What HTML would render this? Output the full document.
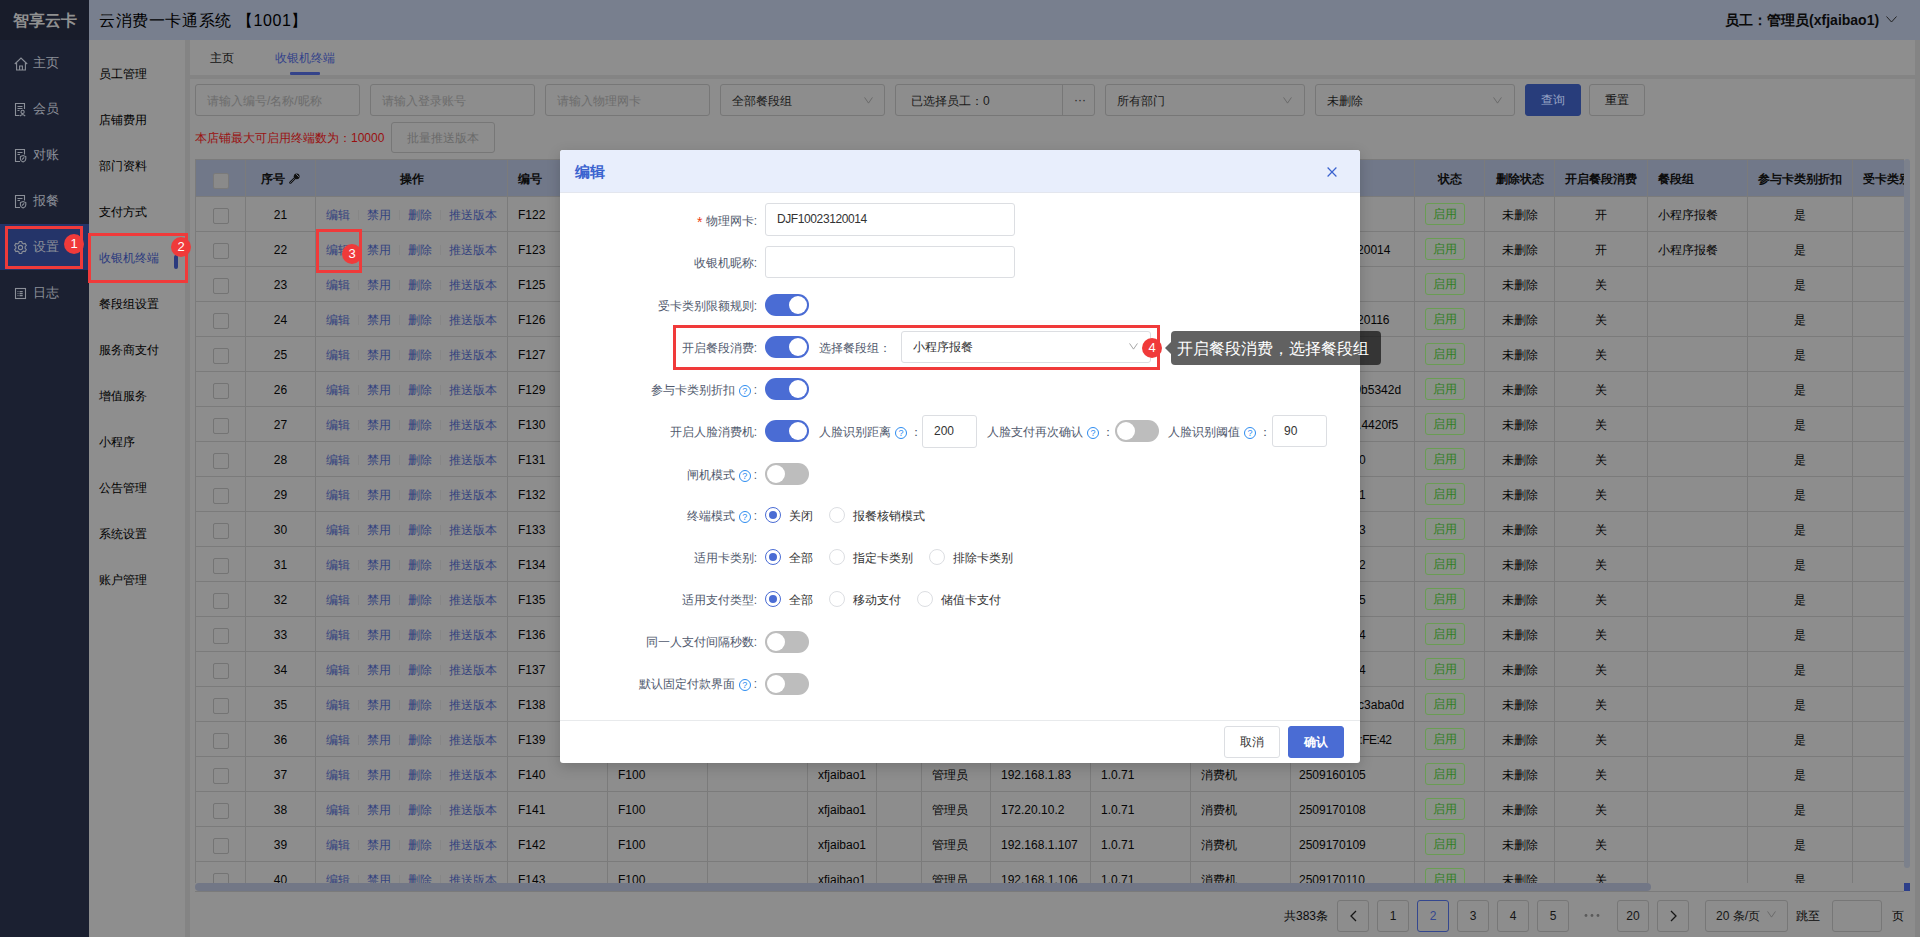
<!DOCTYPE html><html><head><meta charset="utf-8"><style>
*{margin:0;padding:0;box-sizing:border-box}
html,body{width:1920px;height:937px;overflow:hidden}
body{font-family:"Liberation Sans",sans-serif;font-size:12px;color:#0a0a0a;background:#848484;position:relative}
.abs{position:absolute}
#side{position:absolute;left:0;top:0;width:89px;height:937px;background:#1b2031}
#logo{position:absolute;left:0;top:0;width:89px;height:40px;background:#181c2a;color:#909090;font-size:16px;font-weight:bold;line-height:42px;text-align:center;letter-spacing:0}
.sitem{position:absolute;left:0;width:89px;height:46px;line-height:46px;color:#8b8f98;font-size:13px;padding-left:33px}
.sitem svg{position:absolute}
.sitem.act{background:#243469}
#hdr{position:absolute;left:89px;top:0;width:1831px;height:40px;background:#787f8e}
#hdr .t{position:absolute;left:10px;top:1px;line-height:40px;font-size:16px;color:#000;letter-spacing:0.6px}
#hdr .u{position:absolute;right:23px;top:0;line-height:40px;font-size:14px;font-weight:bold;color:#0a0a0a}
#sub{position:absolute;left:89px;top:40px;width:96px;height:897px;background:#8e8e8e}
.mitem{position:absolute;left:10px;font-size:12px;color:#000;line-height:21px}
#tabs{position:absolute;left:190px;top:40px;width:1725px;height:35px;background:#8e8e8e}
.tab{position:absolute;top:1px;line-height:35px;font-size:12px}
#panel{position:absolute;left:190px;top:79px;width:1725px;height:858px;background:#8d8d8d}
.inp{position:absolute;height:32px;border:1px solid #777;border-radius:3px;background:#8d8d8d;line-height:32px;padding-left:11px;color:#1a1a1a;font-size:12px}
.ph{color:#6c6c6c}
.arrow{position:absolute;top:11px;width:11px;height:7px;background:no-repeat}
.btn{position:absolute;height:32px;border:1px solid #777;border-radius:3px;text-align:center;line-height:30px;font-size:12px}
table.g{position:absolute;left:195px;top:159px;border-collapse:collapse;table-layout:fixed}
table.g td,table.g th{border:1px solid #7b7b7b;height:35px;text-align:center;font-size:12px;white-space:nowrap;overflow:hidden;color:#050505;font-weight:normal;padding:2px 0 0 0}
table.g th{background:#717889;height:37px;font-weight:bold;color:#0c0c0c}
table.g td.l,table.g th.l{text-align:left;padding-left:10px}
table.g th{padding-top:3px}
.cb{display:inline-block;width:16px;height:16px;border:1px solid #747474;border-radius:2px;vertical-align:middle;background:#8d8d8d;position:relative;top:1px}
th .cb{background:#8a8a8a;border-color:#7a7a7a}
.lk{color:#33427f}
.sep{display:inline-block;width:1px;height:10px;background:#868686;vertical-align:middle;margin:0 8px}
.tag{display:inline-block;width:40px;height:22px;line-height:21px;border:1px solid #6a9d54;background:#8b9289;color:#2f7f1e;border-radius:3px;font-size:12px;text-align:center;position:relative;top:-1px}
.pg{position:absolute;top:900px;width:32px;height:32px;border:1px solid #777;border-radius:3px;text-align:center;line-height:30px;font-size:12px;color:#161616}
.mask{position:absolute;left:0;top:0;width:1920px;height:937px;background:rgba(0,0,0,0)}
#modal{position:absolute;left:560px;top:150px;width:800px;height:613px;background:#fff;border-radius:3px;overflow:hidden;box-shadow:0 4px 14px rgba(0,0,0,.18)}
#mh{position:absolute;left:0;top:0;width:800px;height:43px;background:#e8eefc;border-bottom:1px solid #e3e6ee}
#mh .tt{position:absolute;left:15px;top:0;line-height:43px;font-size:15px;font-weight:bold;color:#3b63cf}
#mh .x{position:absolute;left:767px;top:17px}
.lab{position:absolute;right:603px;font-size:12px;color:#515a6e;line-height:18px;white-space:nowrap;text-align:right}
.minp{position:absolute;height:33px;border:1px solid #dcdee2;border-radius:3px;background:#fff;line-height:31px;padding-left:11px;font-size:12px;color:#333}
.sw{position:absolute;width:44px;height:22px;border-radius:11px;background:#4a6cd4}
.sw::after{content:"";position:absolute;top:2px;left:24px;width:18px;height:18px;border-radius:50%;background:#fff}
.sw.off{background:#bdbdbd}
.sw.off::after{left:2px}
.q{display:inline-block;width:12px;height:12px;border:1px solid #2d8cf0;border-radius:50%;color:#2d8cf0;font-size:9px;line-height:10px;text-align:center;vertical-align:0px;margin:0 3px 0 4px}
.radio{position:absolute;width:16px;height:16px;border:1px solid #dcdee2;border-radius:50%;background:#fff}
.radio.on{border-color:#4a6cd4}
.radio.on::after{content:"";position:absolute;left:3px;top:3px;width:8px;height:8px;border-radius:50%;background:#4a6cd4}
.rt{position:absolute;font-size:12px;color:#333;line-height:18px;white-space:nowrap}
.mt{position:absolute;font-size:12px;color:#515a6e;line-height:18px;white-space:nowrap}
.rbox{position:absolute;border:3px solid #f03a3a}
.badge{position:absolute;width:20px;height:20px;border-radius:50%;background:#f03a3a;color:#fff;font-size:13px;line-height:20px;text-align:center}
</style></head><body>
<div id="side"><div id="logo">智享云卡</div>
<div class="sitem" style="top:40px"><svg width="14" height="14" viewBox="0 0 14 14" style="left:14px;top:17px"><path d="M0.8 7L7 1L13.2 7M2.6 5.3V13H11.4V5.3M5.6 13V9H8.4V13" fill="none" stroke="#8b8f98" stroke-width="1.1"/></svg>主页</div>
<div class="sitem" style="top:86px"><svg width="14" height="15" viewBox="0 0 14 15" style="left:14px;top:16px"><g fill="none" stroke="#8b8f98" stroke-width="1.1"><path d="M10.5 7V1.5H1.5V13.5H5.5M3.5 4.5H8.5M3.5 6.5H8.5M3.5 8.5H5.5"/><circle cx="8.6" cy="9.9" r="1.6"/><path d="M6 14.2Q8.6 11 11.2 14.2"/></g></svg>会员</div>
<div class="sitem" style="top:132px"><svg width="14" height="15" viewBox="0 0 14 15" style="left:14px;top:16px"><g fill="none" stroke="#8b8f98" stroke-width="1.1"><path d="M10.5 6.5V1.5H1.5V13.5H6M3.5 4.5H8.5M3.5 6.5H6"/><path d="M6.4 8.6L9.1 7.6L11.8 8.6V11Q11.8 12.9 9.1 14Q6.4 12.9 6.4 11Z"/><path d="M8 11.6L10.2 9.4"/></g></svg>对账</div>
<div class="sitem" style="top:178px"><svg width="14" height="15" viewBox="0 0 14 15" style="left:14px;top:16px"><g fill="none" stroke="#8b8f98" stroke-width="1.1"><path d="M10.5 6.5V1.5H1.5V13.5H6M3.5 4.5H8.5M3.5 6.5H6"/><path d="M6.4 8.6L9.1 7.6L11.8 8.6V11Q11.8 12.9 9.1 14Q6.4 12.9 6.4 11Z"/><path d="M8 11.6L10.2 9.4"/></g></svg>报餐</div>
<div class="sitem act" style="top:224px"><svg width="13" height="13" viewBox="0 0 13 13" style="left:14px;top:17px"><g fill="none" stroke="#8b8f98" stroke-width="1.1"><path d="M4.89 2.08 L5.32 0.41 L7.68 0.41 L8.11 2.08 L9.52 2.90 L11.18 2.43 L12.36 4.48 L11.13 5.68 L11.13 7.32 L12.36 8.52 L11.18 10.57 L9.52 10.10 L8.11 10.92 L7.68 12.59 L5.32 12.59 L4.89 10.92 L3.48 10.10 L1.82 10.57 L0.64 8.52 L1.87 7.32 L1.87 5.68 L0.64 4.48 L1.82 2.43 L3.48 2.90Z"/><circle cx="6.5" cy="6.5" r="2.1"/></g></svg>设置</div>
<div class="sitem" style="top:270px"><svg width="13" height="13" viewBox="0 0 13 13" style="left:14px;top:17px"><g fill="none" stroke="#8b8f98" stroke-width="1.1"><rect x="1.5" y="1.5" width="10" height="10"/><path d="M5.5 4.6H8.7M5.5 6.6H8.7M5.5 8.6H8.7"/></g><g fill="#8b8f98"><circle cx="4" cy="4.6" r="0.6"/><circle cx="4" cy="6.6" r="0.6"/><circle cx="4" cy="8.6" r="0.6"/></g></svg>日志</div>
</div>
<div id="hdr"><div class="t">云消费一卡通系统 【1001】</div><div class="u">员工：管理员(xfjaibao1) <svg width="11" height="7" viewBox="0 0 11 7" style="vertical-align:2px;margin-left:3px"><path d="M0.5 0.5L5.5 6L10.5 0.5" fill="none" stroke="#222" stroke-width="1"/></svg></div></div>
<div id="sub"></div>
<div class="mitem" style="left:99px;top:64px;">员工管理</div>
<div class="mitem" style="left:99px;top:110px;">店铺费用</div>
<div class="mitem" style="left:99px;top:156px;">部门资料</div>
<div class="mitem" style="left:99px;top:202px;">支付方式</div>
<div class="mitem" style="left:99px;top:248px;color:#2b3a7e">收银机终端</div>
<div class="mitem" style="left:99px;top:294px;">餐段组设置</div>
<div class="mitem" style="left:99px;top:340px;">服务商支付</div>
<div class="mitem" style="left:99px;top:386px;">增值服务</div>
<div class="mitem" style="left:99px;top:432px;">小程序</div>
<div class="mitem" style="left:99px;top:478px;">公告管理</div>
<div class="mitem" style="left:99px;top:524px;">系统设置</div>
<div class="mitem" style="left:99px;top:570px;">账户管理</div>
<div class="abs" style="left:174px;top:255px;width:4px;height:14px;background:#2b3a7e;border-radius:2px"></div>
<div id="tabs"><div class="tab" style="left:20px;color:#111">主页</div><div class="tab" style="left:85px;color:#34438a">收银机终端</div><div class="abs" style="left:100px;top:32px;width:30px;height:3px;background:#34438a;border-radius:1px"></div></div>
<div id="panel"></div>
<div class="inp ph" style="left:195px;top:84px;width:165px">请输入编号/名称/昵称</div>
<div class="inp ph" style="left:370px;top:84px;width:165px">请输入登录账号</div>
<div class="inp ph" style="left:545px;top:84px;width:165px">请输入物理网卡</div>
<div class="inp" style="left:720px;top:84px;width:165px">全部餐段组<svg class="arrow" style="left:142px;top:12px" width="10" height="8" viewBox="0 0 10 8"><path d="M0.5 0.5L5 7L9.5 0.5" fill="none" stroke="#666" stroke-width="1"/></svg></div>
<div class="inp" style="left:895px;top:84px;width:200px;padding-left:15px">已选择员工：0<span class="abs" style="left:166px;top:0;width:1px;height:30px;background:#777"></span><span class="abs" style="left:178px;top:-1px;color:#222">···</span></div>
<div class="inp" style="left:1105px;top:84px;width:200px">所有部门<svg class="arrow" style="left:176px;top:12px" width="10" height="8" viewBox="0 0 10 8"><path d="M0.5 0.5L5 7L9.5 0.5" fill="none" stroke="#666" stroke-width="1"/></svg></div>
<div class="inp" style="left:1315px;top:84px;width:200px">未删除<svg class="arrow" style="left:176px;top:12px" width="10" height="8" viewBox="0 0 10 8"><path d="M0.5 0.5L5 7L9.5 0.5" fill="none" stroke="#666" stroke-width="1"/></svg></div>
<div class="btn" style="left:1525px;top:84px;width:56px;background:#283d7b;border-color:#283d7b;color:#9ba6c6">查询</div>
<div class="btn" style="left:1589px;top:84px;width:56px;color:#111">重置</div>
<div class="abs" style="left:195px;top:130px;color:#9a1010;font-size:12px;line-height:16px">本店铺最大可启用终端数为：10000</div>
<div class="btn" style="left:391px;top:122px;width:104px;height:31px;color:#6a6a6a">批量推送版本</div>
<table class="g" style="width:1717px"><colgroup><col style="width:50px"><col style="width:70px"><col style="width:192px"><col style="width:100px"><col style="width:100px"><col style="width:100px"><col style="width:69px"><col style="width:45px"><col style="width:69px"><col style="width:100px"><col style="width:100px"><col style="width:100px"><col style="width:124px"><col style="width:70px"><col style="width:70px"><col style="width:93px"><col style="width:100px"><col style="width:105px"><col style="width:60px"></colgroup>
<tr>
<th><span class="cb"></span></th>
<th>序号 <svg width="11" height="11" viewBox="0 0 11 11" style="vertical-align:-1px"><path d="M1.4 9.6L6 5" stroke="#111" stroke-width="2.4" stroke-linecap="round"/><path d="M1.4 9.6L6 5" stroke="#717889" stroke-width="0.7" stroke-linecap="round"/><circle cx="7.7" cy="3.3" r="2.9" fill="#111"/><path d="M7.2 1.2L9.8 3.8" stroke="#717889" stroke-width="1"/></svg></th>
<th>操作</th>
<th class="l">编号</th>
<th>机型</th>
<th>名称</th>
<th>登录账号</th>
<th>角色</th>
<th>角色名</th>
<th>IP地址</th>
<th>版本号</th>
<th>类型</th>
<th></th>
<th>状态</th>
<th>删除状态</th>
<th>开启餐段消费</th>
<th class="l">餐段组</th>
<th>参与卡类别折扣</th>
<th class="l">受卡类别限额</th>
</tr>
<tr><td><span class="cb"></span></td><td>21</td><td><span class="lk">编辑</span><span class="sep"></span><span class="lk">禁用</span><span class="sep"></span><span class="lk">删除</span><span class="sep"></span><span class="lk">推送版本</span></td><td class="l">F122</td><td class="l">F100</td><td></td><td class="l">xfjaibao1</td><td></td><td class="l">管理员</td><td class="l">192.168.1.80</td><td class="l">1.0.71</td><td class="l">消费机</td><td class="l" style="padding-left:8px"></td><td class="l"><span class="tag">启用</span></td><td>未删除</td><td>开</td><td class="l">小程序报餐</td><td>是</td><td></td></tr>
<tr><td><span class="cb"></span></td><td>22</td><td><span class="lk">编辑</span><span class="sep"></span><span class="lk">禁用</span><span class="sep"></span><span class="lk">删除</span><span class="sep"></span><span class="lk">推送版本</span></td><td class="l">F123</td><td class="l">F100</td><td></td><td class="l">xfjaibao1</td><td></td><td class="l">管理员</td><td class="l">192.168.1.80</td><td class="l">1.0.71</td><td class="l">消费机</td><td class="l" style="padding-left:4px">DJF10023120014</td><td class="l"><span class="tag">启用</span></td><td>未删除</td><td>开</td><td class="l">小程序报餐</td><td>是</td><td></td></tr>
<tr><td><span class="cb"></span></td><td>23</td><td><span class="lk">编辑</span><span class="sep"></span><span class="lk">禁用</span><span class="sep"></span><span class="lk">删除</span><span class="sep"></span><span class="lk">推送版本</span></td><td class="l">F125</td><td class="l">F100</td><td></td><td class="l">xfjaibao1</td><td></td><td class="l">管理员</td><td class="l">192.168.1.80</td><td class="l">1.0.71</td><td class="l">消费机</td><td class="l" style="padding-left:8px"></td><td class="l"><span class="tag">启用</span></td><td>未删除</td><td>关</td><td class="l"></td><td>是</td><td></td></tr>
<tr><td><span class="cb"></span></td><td>24</td><td><span class="lk">编辑</span><span class="sep"></span><span class="lk">禁用</span><span class="sep"></span><span class="lk">删除</span><span class="sep"></span><span class="lk">推送版本</span></td><td class="l">F126</td><td class="l">F100</td><td></td><td class="l">xfjaibao1</td><td></td><td class="l">管理员</td><td class="l">192.168.1.80</td><td class="l">1.0.71</td><td class="l">消费机</td><td class="l" style="padding-left:4px">DJF10023120116</td><td class="l"><span class="tag">启用</span></td><td>未删除</td><td>关</td><td class="l"></td><td>是</td><td></td></tr>
<tr><td><span class="cb"></span></td><td>25</td><td><span class="lk">编辑</span><span class="sep"></span><span class="lk">禁用</span><span class="sep"></span><span class="lk">删除</span><span class="sep"></span><span class="lk">推送版本</span></td><td class="l">F127</td><td class="l">F100</td><td></td><td class="l">xfjaibao1</td><td></td><td class="l">管理员</td><td class="l">192.168.1.80</td><td class="l">1.0.71</td><td class="l">消费机</td><td class="l" style="padding-left:8px"></td><td class="l"><span class="tag">启用</span></td><td>未删除</td><td>关</td><td class="l"></td><td>是</td><td></td></tr>
<tr><td><span class="cb"></span></td><td>26</td><td><span class="lk">编辑</span><span class="sep"></span><span class="lk">禁用</span><span class="sep"></span><span class="lk">删除</span><span class="sep"></span><span class="lk">推送版本</span></td><td class="l">F129</td><td class="l">F100</td><td></td><td class="l">xfjaibao1</td><td></td><td class="l">管理员</td><td class="l">192.168.1.80</td><td class="l">1.0.71</td><td class="l">消费机</td><td class="l" style="padding-left:14px">a8c3e1f09b5342d</td><td class="l"><span class="tag">启用</span></td><td>未删除</td><td>关</td><td class="l"></td><td>是</td><td></td></tr>
<tr><td><span class="cb"></span></td><td>27</td><td><span class="lk">编辑</span><span class="sep"></span><span class="lk">禁用</span><span class="sep"></span><span class="lk">删除</span><span class="sep"></span><span class="lk">推送版本</span></td><td class="l">F130</td><td class="l">F100</td><td></td><td class="l">xfjaibao1</td><td></td><td class="l">管理员</td><td class="l">192.168.1.80</td><td class="l">1.0.71</td><td class="l">消费机</td><td class="l" style="padding-left:17px">3f2e1d0a.4420f5</td><td class="l"><span class="tag">启用</span></td><td>未删除</td><td>关</td><td class="l"></td><td>是</td><td></td></tr>
<tr><td><span class="cb"></span></td><td>28</td><td><span class="lk">编辑</span><span class="sep"></span><span class="lk">禁用</span><span class="sep"></span><span class="lk">删除</span><span class="sep"></span><span class="lk">推送版本</span></td><td class="l">F131</td><td class="l">F100</td><td></td><td class="l">xfjaibao1</td><td></td><td class="l">管理员</td><td class="l">192.168.1.80</td><td class="l">1.0.71</td><td class="l">消费机</td><td class="l" style="padding-left:8px">2509120100</td><td class="l"><span class="tag">启用</span></td><td>未删除</td><td>关</td><td class="l"></td><td>是</td><td></td></tr>
<tr><td><span class="cb"></span></td><td>29</td><td><span class="lk">编辑</span><span class="sep"></span><span class="lk">禁用</span><span class="sep"></span><span class="lk">删除</span><span class="sep"></span><span class="lk">推送版本</span></td><td class="l">F132</td><td class="l">F100</td><td></td><td class="l">xfjaibao1</td><td></td><td class="l">管理员</td><td class="l">192.168.1.80</td><td class="l">1.0.71</td><td class="l">消费机</td><td class="l" style="padding-left:8px">2509120101</td><td class="l"><span class="tag">启用</span></td><td>未删除</td><td>关</td><td class="l"></td><td>是</td><td></td></tr>
<tr><td><span class="cb"></span></td><td>30</td><td><span class="lk">编辑</span><span class="sep"></span><span class="lk">禁用</span><span class="sep"></span><span class="lk">删除</span><span class="sep"></span><span class="lk">推送版本</span></td><td class="l">F133</td><td class="l">F100</td><td></td><td class="l">xfjaibao1</td><td></td><td class="l">管理员</td><td class="l">192.168.1.80</td><td class="l">1.0.71</td><td class="l">消费机</td><td class="l" style="padding-left:8px">2509120103</td><td class="l"><span class="tag">启用</span></td><td>未删除</td><td>关</td><td class="l"></td><td>是</td><td></td></tr>
<tr><td><span class="cb"></span></td><td>31</td><td><span class="lk">编辑</span><span class="sep"></span><span class="lk">禁用</span><span class="sep"></span><span class="lk">删除</span><span class="sep"></span><span class="lk">推送版本</span></td><td class="l">F134</td><td class="l">F100</td><td></td><td class="l">xfjaibao1</td><td></td><td class="l">管理员</td><td class="l">192.168.1.80</td><td class="l">1.0.71</td><td class="l">消费机</td><td class="l" style="padding-left:8px">2509120102</td><td class="l"><span class="tag">启用</span></td><td>未删除</td><td>关</td><td class="l"></td><td>是</td><td></td></tr>
<tr><td><span class="cb"></span></td><td>32</td><td><span class="lk">编辑</span><span class="sep"></span><span class="lk">禁用</span><span class="sep"></span><span class="lk">删除</span><span class="sep"></span><span class="lk">推送版本</span></td><td class="l">F135</td><td class="l">F100</td><td></td><td class="l">xfjaibao1</td><td></td><td class="l">管理员</td><td class="l">192.168.1.80</td><td class="l">1.0.71</td><td class="l">消费机</td><td class="l" style="padding-left:8px">2509120105</td><td class="l"><span class="tag">启用</span></td><td>未删除</td><td>关</td><td class="l"></td><td>是</td><td></td></tr>
<tr><td><span class="cb"></span></td><td>33</td><td><span class="lk">编辑</span><span class="sep"></span><span class="lk">禁用</span><span class="sep"></span><span class="lk">删除</span><span class="sep"></span><span class="lk">推送版本</span></td><td class="l">F136</td><td class="l">F100</td><td></td><td class="l">xfjaibao1</td><td></td><td class="l">管理员</td><td class="l">192.168.1.80</td><td class="l">1.0.71</td><td class="l">消费机</td><td class="l" style="padding-left:8px">2509120104</td><td class="l"><span class="tag">启用</span></td><td>未删除</td><td>关</td><td class="l"></td><td>是</td><td></td></tr>
<tr><td><span class="cb"></span></td><td>34</td><td><span class="lk">编辑</span><span class="sep"></span><span class="lk">禁用</span><span class="sep"></span><span class="lk">删除</span><span class="sep"></span><span class="lk">推送版本</span></td><td class="l">F137</td><td class="l">F100</td><td></td><td class="l">xfjaibao1</td><td></td><td class="l">管理员</td><td class="l">192.168.1.80</td><td class="l">1.0.71</td><td class="l">消费机</td><td class="l" style="padding-left:8px">2509120104</td><td class="l"><span class="tag">启用</span></td><td>未删除</td><td>关</td><td class="l"></td><td>是</td><td></td></tr>
<tr><td><span class="cb"></span></td><td>35</td><td><span class="lk">编辑</span><span class="sep"></span><span class="lk">禁用</span><span class="sep"></span><span class="lk">删除</span><span class="sep"></span><span class="lk">推送版本</span></td><td class="l">F138</td><td class="l">F100</td><td></td><td class="l">xfjaibao1</td><td></td><td class="l">管理员</td><td class="l">192.168.1.80</td><td class="l">1.0.71</td><td class="l">消费机</td><td class="l" style="padding-left:17px">e1f6a2b9c3aba0d</td><td class="l"><span class="tag">启用</span></td><td>未删除</td><td>关</td><td class="l"></td><td>是</td><td></td></tr>
<tr><td><span class="cb"></span></td><td>36</td><td><span class="lk">编辑</span><span class="sep"></span><span class="lk">禁用</span><span class="sep"></span><span class="lk">删除</span><span class="sep"></span><span class="lk">推送版本</span></td><td class="l">F139</td><td class="l">F100</td><td></td><td class="l">xfjaibao1</td><td></td><td class="l">管理员</td><td class="l">192.168.1.80</td><td class="l">1.0.71</td><td class="l">消费机</td><td class="l" style="padding-left:22px;letter-spacing:-0.6px">A4:5B:2C:FE:42</td><td class="l"><span class="tag">启用</span></td><td>未删除</td><td>关</td><td class="l"></td><td>是</td><td></td></tr>
<tr><td><span class="cb"></span></td><td>37</td><td><span class="lk">编辑</span><span class="sep"></span><span class="lk">禁用</span><span class="sep"></span><span class="lk">删除</span><span class="sep"></span><span class="lk">推送版本</span></td><td class="l">F140</td><td class="l">F100</td><td></td><td class="l">xfjaibao1</td><td></td><td class="l">管理员</td><td class="l">192.168.1.83</td><td class="l">1.0.71</td><td class="l">消费机</td><td class="l" style="padding-left:8px">2509160105</td><td class="l"><span class="tag">启用</span></td><td>未删除</td><td>关</td><td class="l"></td><td>是</td><td></td></tr>
<tr><td><span class="cb"></span></td><td>38</td><td><span class="lk">编辑</span><span class="sep"></span><span class="lk">禁用</span><span class="sep"></span><span class="lk">删除</span><span class="sep"></span><span class="lk">推送版本</span></td><td class="l">F141</td><td class="l">F100</td><td></td><td class="l">xfjaibao1</td><td></td><td class="l">管理员</td><td class="l">172.20.10.2</td><td class="l">1.0.71</td><td class="l">消费机</td><td class="l" style="padding-left:8px">2509170108</td><td class="l"><span class="tag">启用</span></td><td>未删除</td><td>关</td><td class="l"></td><td>是</td><td></td></tr>
<tr><td><span class="cb"></span></td><td>39</td><td><span class="lk">编辑</span><span class="sep"></span><span class="lk">禁用</span><span class="sep"></span><span class="lk">删除</span><span class="sep"></span><span class="lk">推送版本</span></td><td class="l">F142</td><td class="l">F100</td><td></td><td class="l">xfjaibao1</td><td></td><td class="l">管理员</td><td class="l">192.168.1.107</td><td class="l">1.0.71</td><td class="l">消费机</td><td class="l" style="padding-left:8px">2509170109</td><td class="l"><span class="tag">启用</span></td><td>未删除</td><td>关</td><td class="l"></td><td>是</td><td></td></tr>
<tr><td><span class="cb"></span></td><td>40</td><td><span class="lk">编辑</span><span class="sep"></span><span class="lk">禁用</span><span class="sep"></span><span class="lk">删除</span><span class="sep"></span><span class="lk">推送版本</span></td><td class="l">F143</td><td class="l">F100</td><td></td><td class="l">xfjaibao1</td><td></td><td class="l">管理员</td><td class="l">192.168.1.106</td><td class="l">1.0.71</td><td class="l">消费机</td><td class="l" style="padding-left:8px">2509170110</td><td class="l"><span class="tag">启用</span></td><td>未删除</td><td>关</td><td class="l"></td><td>是</td><td></td></tr>
</table>
<div class="abs" style="left:195px;top:883px;width:1720px;height:17px;background:#8d8d8d"></div>
<div class="abs" style="left:195px;top:891px;width:1709px;height:1px;background:#7b7b7b"></div>
<div class="abs" style="left:195px;top:883px;width:1456px;height:8px;background:#727786;border-radius:4px"></div>
<div class="abs" style="left:1904px;top:159px;width:11px;height:741px;background:#8d8d8d"></div>
<div class="abs" style="left:1904px;top:159px;width:6px;height:709px;background:#7c818c;border-radius:3px"></div>
<div class="abs" style="left:1904px;top:883px;width:6px;height:8px;background:#2d3f8a"></div>
<div class="abs" style="left:1284px;top:908px;font-size:12px;line-height:16px">共383条</div>
<div class="pg" style="left:1337px;"><svg width="7" height="12" viewBox="0 0 7 12" style="vertical-align:-2px"><path d="M6 1L1 6L6 11" fill="none" stroke="#161616" stroke-width="1.3"/></svg></div>
<div class="pg" style="left:1377px;">1</div>
<div class="pg" style="left:1417px;border-color:#34478f;color:#34478f">2</div>
<div class="pg" style="left:1457px;">3</div>
<div class="pg" style="left:1497px;">4</div>
<div class="pg" style="left:1537px;">5</div>
<div class="pg" style="left:1617px;">20</div>
<div class="pg" style="left:1657px;"><svg width="7" height="12" viewBox="0 0 7 12" style="vertical-align:-2px"><path d="M1 1L6 6L1 11" fill="none" stroke="#161616" stroke-width="1.3"/></svg></div>
<svg class="abs" style="left:1584px;top:913px" width="16" height="5" viewBox="0 0 16 5"><circle cx="2" cy="2.5" r="1.4" fill="#5a5a5a"/><circle cx="8" cy="2.5" r="1.4" fill="#5a5a5a"/><circle cx="14" cy="2.5" r="1.4" fill="#5a5a5a"/></svg>
<div class="pg" style="left:1705px;width:83px;padding-left:10px;text-align:left">20 条/页<svg class="arrow" style="left:60px;top:10px" width="10" height="8" viewBox="0 0 10 8"><path d="M0.5 0.5L5 7L9.5 0.5" fill="none" stroke="#666" stroke-width="1"/></svg></div>
<div class="abs" style="left:1796px;top:908px;font-size:12px;line-height:16px">跳至</div>
<div class="pg" style="left:1832px;width:50px"></div>
<div class="abs" style="left:1892px;top:908px;font-size:12px;line-height:16px">页</div>
<div class="rbox" style="left:5px;top:226px;width:78px;height:43px"></div>
<div class="badge" style="left:64px;top:234px">1</div>
<div class="rbox" style="left:88px;top:233px;width:100px;height:50px"></div>
<div class="badge" style="left:171px;top:237px">2</div>
<div class="rbox" style="left:316px;top:229px;width:46px;height:44px"></div>
<div class="badge" style="left:342px;top:244px">3</div>
<div id="modal">
<div id="mh"><div class="tt">编辑</div><svg class="x" width="10" height="10" viewBox="0 0 10 10"><path d="M0.6 0.5L9.4 9.5M9.4 0.5L0.6 9.5" stroke="#3b63cf" stroke-width="1.2"/></svg></div>
<div class="lab" style="top:61px"><span style="color:#ed4014;font-size:14px;position:relative;top:2px">*</span> 物理网卡:</div>
<div class="minp" style="left:205px;top:53px;width:250px;letter-spacing:-0.4px">DJF10023120014</div>
<div class="lab" style="top:104px">收银机昵称:</div>
<div class="minp" style="left:205px;top:96px;width:250px;height:32px"></div>
<div class="lab" style="top:147px">受卡类别限额规则:</div>
<div class="sw" style="left:205px;top:144px"></div>
<div class="lab" style="top:189px">开启餐段消费:</div>
<div class="sw" style="left:205px;top:186px"></div>
<div class="mt" style="left:259px;top:189px">选择餐段组：</div>
<div class="minp" style="left:341px;top:181px;width:250px;height:32px;padding-left:11px">小程序报餐<svg class="arrow" style="left:226px;top:11px" width="10" height="8" viewBox="0 0 10 8"><path d="M0.5 0.5L5 7L9.5 0.5" fill="none" stroke="#999" stroke-width="1"/></svg></div>
<div class="lab" style="top:231px">参与卡类别折扣<span class="q">?</span>:</div>
<div class="sw" style="left:205px;top:228px"></div>
<div class="lab" style="top:273px">开启人脸消费机:</div>
<div class="sw" style="left:205px;top:270px"></div>
<div class="mt" style="left:259px;top:273px">人脸识别距离<span class="q">?</span>：</div>
<div class="minp" style="left:362px;top:265px;width:55px;height:33px">200</div>
<div class="mt" style="left:427px;top:273px">人脸支付再次确认<span class="q">?</span>：</div>
<div class="sw off" style="left:555px;top:270px"></div>
<div class="mt" style="left:608px;top:273px">人脸识别阈值<span class="q">?</span>：</div>
<div class="minp" style="left:712px;top:265px;width:55px;height:32px">90</div>
<div class="lab" style="top:316px">闸机模式<span class="q">?</span>:</div>
<div class="sw off" style="left:205px;top:313px"></div>
<div class="lab" style="top:357px">终端模式<span class="q">?</span>:</div>
<div class="radio on" style="left:205px;top:357px"></div>
<div class="rt" style="left:229px;top:357px">关闭</div>
<div class="radio" style="left:269px;top:357px"></div>
<div class="rt" style="left:293px;top:357px">报餐核销模式</div>
<div class="lab" style="top:399px">适用卡类别:</div>
<div class="radio on" style="left:205px;top:399px"></div>
<div class="rt" style="left:229px;top:399px">全部</div>
<div class="radio" style="left:269px;top:399px"></div>
<div class="rt" style="left:293px;top:399px">指定卡类别</div>
<div class="radio" style="left:369px;top:399px"></div>
<div class="rt" style="left:393px;top:399px">排除卡类别</div>
<div class="lab" style="top:441px">适用支付类型:</div>
<div class="radio on" style="left:205px;top:441px"></div>
<div class="rt" style="left:229px;top:441px">全部</div>
<div class="radio" style="left:269px;top:441px"></div>
<div class="rt" style="left:293px;top:441px">移动支付</div>
<div class="radio" style="left:357px;top:441px"></div>
<div class="rt" style="left:381px;top:441px">储值卡支付</div>
<div class="lab" style="top:483px">同一人支付间隔秒数:</div>
<div class="sw off" style="left:205px;top:481px"></div>
<div class="lab" style="top:525px">默认固定付款界面<span class="q">?</span>:</div>
<div class="sw off" style="left:205px;top:523px"></div>
<div class="abs" style="left:0;top:570px;width:800px;height:1px;background:#e8eaec"></div>
<div class="btn" style="left:664px;top:576px;width:56px;border-color:#dcdee2;color:#333;background:#fff">取消</div>
<div class="btn" style="left:728px;top:576px;width:56px;border-color:#4a6cd4;color:#fff;background:#4a6cd4;font-weight:bold">确认</div>
</div>
<div class="rbox" style="left:673px;top:325px;width:487px;height:45px"></div>
<div class="badge" style="left:1142px;top:338px">4</div>
<div class="abs" style="left:1171px;top:331px;width:210px;height:34px;background:rgba(0,0,0,.62);border-radius:4px;color:#fff;font-size:16px;line-height:36px;padding-left:6px;white-space:nowrap">开启餐段消费，选择餐段组</div>
<div class="abs" style="left:1165px;top:342px;width:0;height:0;border-top:6px solid transparent;border-bottom:6px solid transparent;border-right:6px solid rgba(0,0,0,.62)"></div>
</body></html>
